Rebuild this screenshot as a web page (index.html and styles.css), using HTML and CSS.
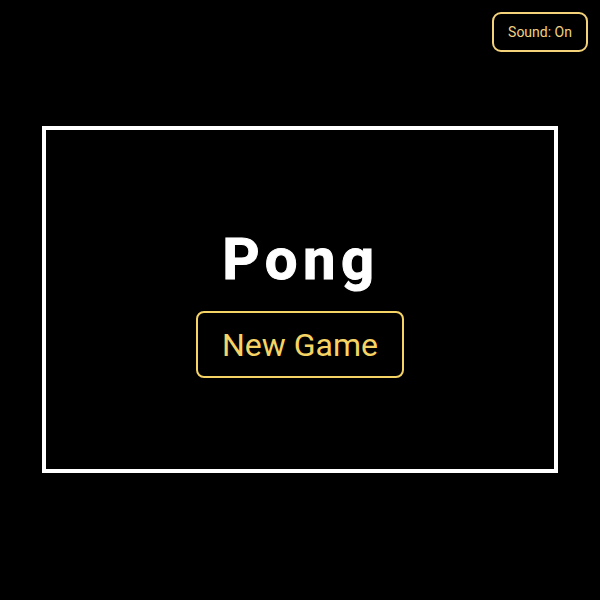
FILE: index.html
```html
<!DOCTYPE html>
<html>
<head>
<meta charset="utf-8">
<link rel="stylesheet" href="styles.css">
</head>
<body>
<div class="page">
  <button class="sound">Sound: On</button>
  <div class="board">
    <h1 class="title">Pong</h1>
    <button class="new-game">New Game</button>
  </div>
</div>
</body>
</html>
```
FILE: styles.css
```css
html, body {
  margin: 0;
  padding: 0;
  background: #000;
  width: 600px;
  height: 600px;
  overflow: hidden;
  font-family: Roboto, "Liberation Sans", sans-serif;
}
.page {
  position: relative;
  width: 600px;
  height: 600px;
  display: flex;
  align-items: center;
  justify-content: center;
}
.sound {
  position: absolute;
  top: 12px;
  right: 12px;
  width: 96px;
  height: 40px;
  background: #000;
  color: #f0d285;
  border: 2px solid #f3d27a;
  border-radius: 9px;
  font-family: Roboto, "Liberation Sans", sans-serif;
  font-size: 14px;
  padding: 0;
}
.board {
  box-sizing: border-box;
  width: 516px;
  height: 347px;
  border: 4px solid #fff;
  display: flex;
  flex-direction: column;
  align-items: center;
  justify-content: center;
  margin-top: -1px;
}
.title {
  margin: 4px 0 18px 0;
  color: #fff;
  font-size: 58px;
  font-weight: 700;
  -webkit-text-stroke: 1px #fff;
  letter-spacing: 5.5px;
  line-height: 68px;
  padding-left: 2px;
}
.new-game {
  box-sizing: border-box;
  width: 208px;
  height: 67px;
  background: #000;
  color: #f6d365;
  border: 2px solid #f6d365;
  border-radius: 8px;
  font-family: Roboto, "Liberation Sans", sans-serif;
  font-size: 32px;
  padding: 0;
}
```
